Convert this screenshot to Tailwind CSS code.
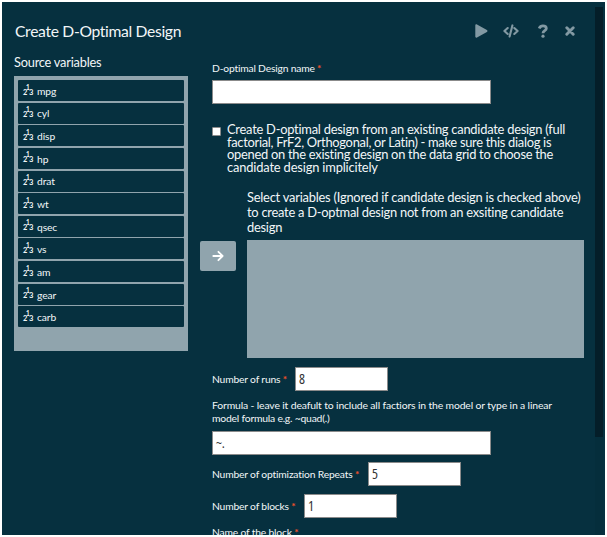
<!DOCTYPE html>
<html lang="en"><head><meta charset="utf-8"><title>Create D-Optimal Design</title>
<script src="https://cdn.jsdelivr.net/npm/@tailwindcss/browser@4"></script></head>
<body class="bg-white p-[2px] w-[607px] h-[537px] overflow-hidden">
<main class="relative w-[603px] h-[533px] overflow-hidden bg-[#06303f] text-[#f2f6f8] font-['Lato',sans-serif] pl-3">
  <header class="flex items-center justify-between h-[46px] pt-[12px] pr-[29px]">
    <h1 class="text-[15.7px] leading-[20px] pl-px pb-px tracking-[-0.34px]">Create D-Optimal Design</h1>
    <div class="flex items-center text-[#8299a3] h-[20px]">
      <svg class="w-[13px] h-[14px]" viewBox="0 0 13 14" fill="currentColor"><path d="M.3 1.4C.3.4 1.2 0 2 .5l9.9 5.6c.8.4.8 1.4 0 1.8L2 13.5c-.8.5-1.7.1-1.7-.9z"/></svg>
      <svg class="w-[16px] h-[14px] ml-[15px]" viewBox="0 0 16 14" fill="none" stroke="currentColor" stroke-width="2.1" stroke-linecap="round" stroke-linejoin="round"><path d="M4.7 4 1.4 7l3.3 3M11.3 4l3.3 3-3.3 3M9.4 1.4 6.6 12.6"/></svg>
      <svg class="w-[10px] h-[14px] ml-[19px]" viewBox="0 0 10 14" fill="none" stroke="currentColor" stroke-width="2.8" stroke-linejoin="round"><path d="M1.2 4.4C1.9 2.6 3.2 1.8 4.9 1.8c2 0 3.4 1 3.4 2.6 0 2.3-3.3 2.2-3.3 4.8"/><circle cx="5" cy="12.2" r="1.6" fill="currentColor" stroke="none"/></svg>
      <svg class="w-[10px] h-[10px] ml-[17px] mr-px" viewBox="0 0 10 10" fill="none" stroke="currentColor" stroke-width="2.9" stroke-linecap="round"><path d="m1.8 1.8 6.4 6.4M8.2 1.8 1.8 8.2"/></svg>
    </div>
  </header>
  <div class="flex">
    <section class="w-[174px]">
      <h2 class="text-[12.8px] leading-[16px] pt-[6px] tracking-[-0.22px]">Source variables</h2>
      <ul id="vars" class="mt-[6px] h-[275px] bg-[#90a4ad] px-1 pt-1 flex flex-col gap-[1.65px] text-[10.3px] tracking-[-0.1px]"></ul>
    </section>
    <section class="w-[396px] pl-[12px]">
      <div class="pl-[12px]">
        <div class="text-[10.3px] leading-[14px] pt-[13px] tracking-[-0.19px]">D-optimal Design name <span class="text-[#f0502a] font-bold">*</span></div>
        <div class="mt-[5px] w-[279px] h-[24px] bg-white border border-[#8b8b8b]"></div>
        <div class="flex mt-[19px]">
          <div class="mt-[4px] w-[9px] h-[9px] rounded-[1px] bg-white border border-[#8b8b8b]"></div>
          <div class="pl-[6px] text-[12.9px] leading-[12.6px] whitespace-nowrap">
            <div class="tracking-[-0.25px]">Create D-optimal design from an existing candidate design (full</div>
            <div class="tracking-[-0.29px]">factorial, FrF2, Orthogonal, or Latin) - make sure this dialog is</div>
            <div class="tracking-[-0.27px]">opened on the existing design on the data grid to choose the</div>
            <div class="tracking-[-0.17px]">candidate design implicitely</div>
          </div>
        </div>
      </div>
      <div class="flex items-end mt-[16px] h-[169px]">
        <button class="flex items-center justify-center w-[36px] h-[30px] mb-[87px] rounded-[2px] bg-[#90a4ad]">
          <svg class="w-[12px] h-[12px]" viewBox="0 0 12 12" fill="none" stroke="#fff" stroke-width="1.8" stroke-linecap="round" stroke-linejoin="round"><path d="M1.3 6h9M6.4 1.8 10.6 6l-4.2 4.2"/></svg>
        </button>
        <div class="pl-[11px] text-[12.9px] leading-[15px] whitespace-nowrap tracking-[-0.25px]">
          <div class="tracking-[-0.23px]">Select variables (Ignored if candidate design is checked above)</div>
          <div class="tracking-[-0.26px]">to create a D-optmal design not from an exsiting candidate</div>
          <div>design</div>
          <div class="mt-[5px] w-[337px] h-[118px] bg-[#90a4ad]"></div>
        </div>
      </div>
      <div class="pl-[12px] text-[10.3px] leading-[13px] tracking-[-0.18px]">
        <div class="flex items-center mt-[9px] h-[24px]"><span class="w-[83px]">Number of runs <span class="text-[#f0502a] font-bold">*</span></span><div class="w-[93px] h-[24px] bg-white border border-[#8b8b8b] text-[#333] font-['Open_Sans'] font-stretch-[85%] text-[14px] leading-[22px] pl-[3px]">8</div></div>
        <div class="mt-[8px] text-[10.4px] leading-[13px] whitespace-nowrap"><div class="tracking-[-0.145px]">Formula - leave it deafult to include all factiors in the model or type in a linear</div><div class="tracking-[-0.23px]">model formula e.g. ~quad(.)</div></div>
        <div class="mt-[6px] w-[279px] h-[24px] bg-white border border-[#8b8b8b] text-[#333] font-['Open_Sans'] font-stretch-[85%] text-[14px] leading-[22px] pl-[3px]">~.</div>
        <div class="flex items-center mt-[7px] h-[24px]"><span class="w-[156px]">Number of optimization Repeats <span class="text-[#f0502a] font-bold">*</span></span><div class="w-[93px] h-[24px] bg-white border border-[#8b8b8b] text-[#333] font-['Open_Sans'] font-stretch-[85%] text-[14px] leading-[22px] pl-[3px]">5</div></div>
        <div class="flex items-center mt-[8px] h-[24px]"><span class="w-[92px]">Number of blocks <span class="text-[#f0502a] font-bold">*</span></span><div class="w-[93px] h-[24px] bg-white border border-[#8b8b8b] text-[#333] font-['Open_Sans'] font-stretch-[85%] text-[14px] leading-[22px] pl-[3px]">1</div></div>
        <div class="mt-[8px]">Name of the block <span class="text-[#f0502a] font-bold">*</span></div>
      </div>
    </section>
  </div>
  <!-- Scrollbar overlay -->
  <div class="absolute right-[2px] top-[5px] bottom-0 w-[8px] bg-[#052e3c]"><div class="h-[430px] w-[7.5px] bg-[#041e29]"></div></div>
</main>
<script>
document.getElementById('vars').innerHTML = ['mpg','cyl','disp','hp','drat','wt','qsec','vs','am','gear','carb'].map(v =>
 `<li class="flex items-center h-[21px] shrink-0 bg-[#06303f] pl-[5px] rounded-[1px]"><span class="relative w-[14px] h-[12px] text-[7.5px] leading-[8px] font-bold"><span class="absolute left-0 top-[4px]">2</span><span class="absolute left-[3px] -top-px text-[6.5px]">1</span><span class="absolute left-[6px] top-[4px]">3</span></span><span class="pt-[2px]">${v}</span></li>`).join('');
</script>
</body></html>
